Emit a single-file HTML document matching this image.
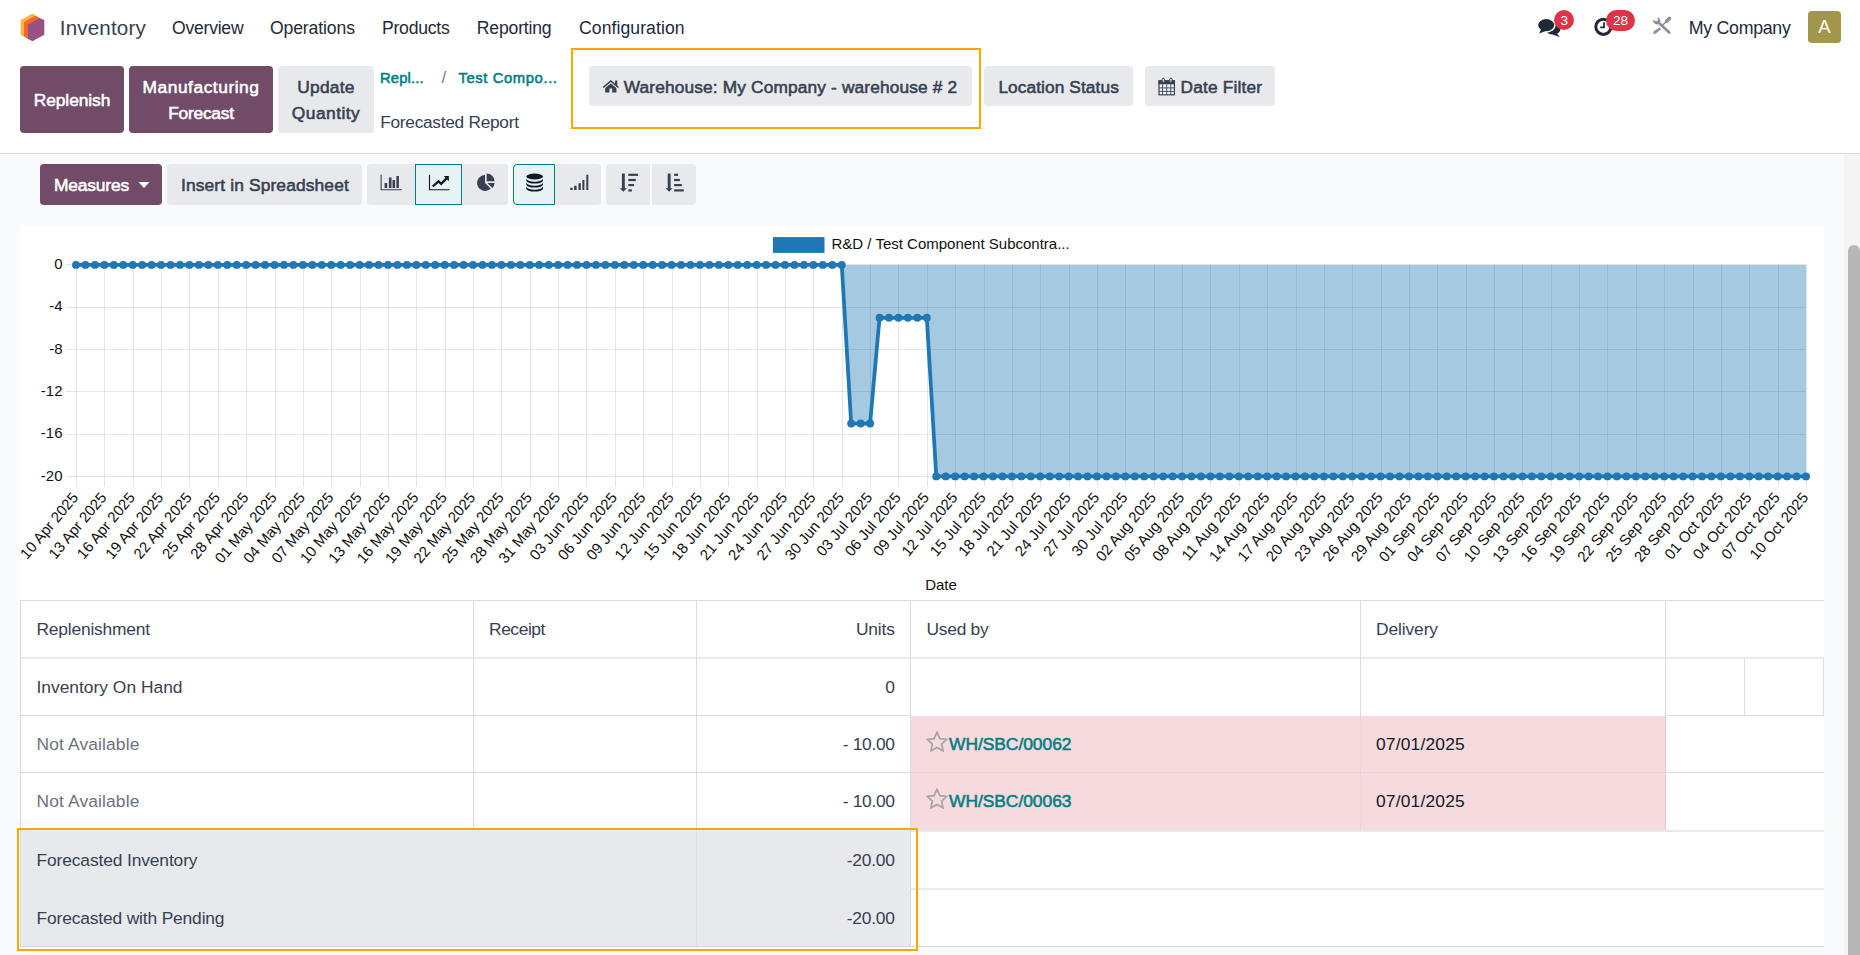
<!DOCTYPE html>
<html lang="en"><head><meta charset="utf-8"><title>Forecasted Report</title>
<style>
html,body{margin:0;padding:0;}
body{width:1860px;height:955px;overflow:hidden;position:relative;background:#fff;font-family:"Liberation Sans",Arial,sans-serif;}
.b{position:absolute;display:block;}
.t{position:absolute;white-space:nowrap;display:block;}
</style></head><body>
<span class="t" style="top:13.10px;font-size:20.6px;line-height:29px;color:#374151;letter-spacing:0.163px;left:59.80px;">Inventory</span>
<span class="t" style="top:15.90px;font-size:17.6px;line-height:25px;color:#1f2937;letter-spacing:-0.244px;left:172.00px;">Overview</span>
<span class="t" style="top:15.90px;font-size:17.6px;line-height:25px;color:#1f2937;letter-spacing:-0.109px;left:269.90px;">Operations</span>
<span class="t" style="top:15.90px;font-size:17.6px;line-height:25px;color:#1f2937;letter-spacing:-0.245px;left:382.00px;">Products</span>
<span class="t" style="top:15.90px;font-size:17.6px;line-height:25px;color:#1f2937;letter-spacing:-0.179px;left:476.80px;">Reporting</span>
<span class="t" style="top:15.90px;font-size:17.6px;line-height:25px;color:#1f2937;letter-spacing:0.078px;left:579.00px;">Configuration</span>
<span class="t" style="top:15.90px;font-size:17.8px;line-height:25px;color:#1f2937;letter-spacing:-0.286px;left:1688.70px;">My Company</span>
<div class="b " style="left:1808px;top:11px;width:33px;height:32px;background:#A2964A;border-radius:4px;"><span class="t" style="top:3.00px;font-size:18.5px;line-height:26px;color:#fff;left:-483.50px;width:1000px;text-align:center;">A</span></div>
<div class="b " style="left:1554.2px;top:10.2px;width:20.200000000000045px;height:20.2px;background:#DC3545;border-radius:10.1px;z-index:3;"><span class="t" style="top:0.90px;font-size:13.6px;line-height:19px;color:#fff;left:-489.90px;width:1000px;text-align:center;">3</span></div>
<div class="b " style="left:1606.2px;top:9.8px;width:28.59999999999991px;height:21.0px;background:#DC3545;border-radius:10.5px;z-index:3;"><span class="t" style="top:1.10px;font-size:13.6px;line-height:19px;color:#fff;left:-485.70px;width:1000px;text-align:center;">28</span></div>
<div class="b " style="left:20px;top:66px;width:104px;height:67px;background:#714B67;border-radius:4px;"><span class="t" style="top:21.50px;font-size:17.4px;line-height:24px;color:#fff;-webkit-text-stroke:0.55px #fff;letter-spacing:-0.098px;left:-448.00px;width:1000px;text-align:center;">Replenish</span></div>
<div class="b " style="left:129px;top:66px;width:144px;height:67px;background:#714B67;border-radius:4px;"><span class="t" style="top:8.60px;font-size:17.4px;line-height:24px;color:#fff;-webkit-text-stroke:0.55px #fff;letter-spacing:0.518px;left:-428.00px;width:1000px;text-align:center;">Manufacturing</span><span class="t" style="top:34.60px;font-size:17.4px;line-height:24px;color:#fff;-webkit-text-stroke:0.55px #fff;letter-spacing:-0.274px;left:-428.00px;width:1000px;text-align:center;">Forecast</span></div>
<div class="b " style="left:278px;top:66px;width:96px;height:67px;background:#E7E9ED;border-radius:4px;"><span class="t" style="top:8.60px;font-size:17.4px;line-height:24px;color:#374151;-webkit-text-stroke:0.55px #374151;letter-spacing:0.232px;left:-452.00px;width:1000px;text-align:center;">Update</span><span class="t" style="top:34.60px;font-size:17.4px;line-height:24px;color:#374151;-webkit-text-stroke:0.55px #374151;letter-spacing:0.462px;left:-452.00px;width:1000px;text-align:center;">Quantity</span></div>
<span class="t" style="top:67.90px;font-size:14.8px;line-height:21px;color:#017E84;-webkit-text-stroke:0.55px #017E84;letter-spacing:0.161px;left:379.90px;">Repl...</span>
<span class="t" style="top:67.40px;font-size:15.6px;line-height:22px;color:#6b7280;left:441.80px;">/</span>
<span class="t" style="top:67.90px;font-size:14.8px;line-height:21px;color:#017E84;-webkit-text-stroke:0.55px #017E84;letter-spacing:0.608px;left:458.40px;">Test Compo...</span>
<span class="t" style="top:110.30px;font-size:17.3px;line-height:24px;color:#374151;letter-spacing:-0.269px;left:380.20px;">Forecasted Report</span>
<div class="b " style="left:570.6px;top:48.4px;width:410.4px;height:80.5px;border:2.5px solid #FFA500;box-sizing:border-box;"></div>
<div class="b " style="left:589.2px;top:66px;width:382.9px;height:39.900000000000006px;background:#E7E9ED;border-radius:4px;"></div>
<span class="t" style="top:74.80px;font-size:17.3px;line-height:24px;color:#374151;-webkit-text-stroke:0.55px #374151;letter-spacing:0.156px;left:623.70px;">Warehouse: My Company - warehouse # 2</span>
<div class="b " style="left:983.9px;top:66px;width:149.10000000000002px;height:39.900000000000006px;background:#E7E9ED;border-radius:4px;"></div>
<span class="t" style="top:74.80px;font-size:17.3px;line-height:24px;color:#374151;-webkit-text-stroke:0.55px #374151;letter-spacing:0.089px;left:998.40px;">Location Status</span>
<div class="b " style="left:1144.8px;top:66px;width:130.20000000000005px;height:39.900000000000006px;background:#E7E9ED;border-radius:4px;"></div>
<span class="t" style="top:74.80px;font-size:17.3px;line-height:24px;color:#374151;-webkit-text-stroke:0.55px #374151;letter-spacing:0.164px;left:1180.60px;">Date Filter</span>
<div class="b " style="left:0px;top:153px;width:1860px;height:802px;background:#F9FAFB;border-top:1px solid #D8DADD;box-sizing:border-box;z-index:-1;"></div>
<div class="b " style="left:1844px;top:154px;width:16px;height:801px;background:#F4F4F4;"></div>
<div class="b " style="left:1848px;top:245px;width:12px;height:730px;background:#B7B7B7;border-radius:6px;"></div>
<div class="b " style="left:40px;top:164px;width:122px;height:40.69999999999999px;background:#714B67;border-radius:4px;"></div>
<span class="t" style="top:173.10px;font-size:17.4px;line-height:24px;color:#fff;-webkit-text-stroke:0.55px #fff;letter-spacing:-0.175px;left:54.00px;">Measures</span>
<div class="b " style="left:167.2px;top:164px;width:194.8px;height:40.69999999999999px;background:#E7E9ED;border-radius:4px;"></div>
<span class="t" style="top:173.10px;font-size:17.4px;line-height:24px;color:#374151;-webkit-text-stroke:0.55px #374151;letter-spacing:0.124px;left:181.00px;">Insert in Spreadsheet</span>
<div class="b " style="left:367px;top:164px;width:141px;height:40.69999999999999px;background:#E7E9ED;border-radius:4px;"></div>
<div class="b " style="left:415px;top:164px;width:47px;height:40.69999999999999px;background:#E6F2F3;border:1px solid #017E84;box-sizing:border-box;"></div>
<div class="b " style="left:513px;top:164px;width:88px;height:40.69999999999999px;background:#E7E9ED;border-radius:4px;"></div>
<div class="b " style="left:513px;top:164px;width:42px;height:40.69999999999999px;background:#E6F2F3;border:1px solid #017E84;box-sizing:border-box;border-radius:4px 0 0 4px;"></div>
<div class="b " style="left:606.1px;top:164px;width:43.69999999999993px;height:40.69999999999999px;background:#E7E9ED;border-radius:4px 0 0 4px;"></div>
<div class="b " style="left:652px;top:164px;width:43.89999999999998px;height:40.69999999999999px;background:#E7E9ED;border-radius:0 4px 4px 0;"></div>
<div class="b " style="left:20px;top:225px;width:1804px;height:375px;background:#fff;"></div>
<svg class="b" style="left:0;top:0" width="1844" height="610" viewBox="0 0 1844 610" font-family="Liberation Sans, Arial, sans-serif"><path d="M66 264.5 H1806.0 M66 307.5 H1806.0 M66 349.5 H1806.0 M66 391.5 H1806.0 M66 434.5 H1806.0 M66 476.5 H1806.0 M76.5 264.5 V486.5 M104.5 264.5 V486.5 M133.5 264.5 V486.5 M161.5 264.5 V486.5 M189.5 264.5 V486.5 M218.5 264.5 V486.5 M246.5 264.5 V486.5 M275.5 264.5 V486.5 M303.5 264.5 V486.5 M331.5 264.5 V486.5 M360.5 264.5 V486.5 M388.5 264.5 V486.5 M416.5 264.5 V486.5 M445.5 264.5 V486.5 M473.5 264.5 V486.5 M501.5 264.5 V486.5 M530.5 264.5 V486.5 M558.5 264.5 V486.5 M586.5 264.5 V486.5 M615.5 264.5 V486.5 M643.5 264.5 V486.5 M672.5 264.5 V486.5 M700.5 264.5 V486.5 M728.5 264.5 V486.5 M757.5 264.5 V486.5 M785.5 264.5 V486.5 M813.5 264.5 V486.5 M842.5 264.5 V486.5 M870.5 264.5 V486.5 M898.5 264.5 V486.5 M927.5 264.5 V486.5 M955.5 264.5 V486.5 M984.5 264.5 V486.5 M1012.5 264.5 V486.5 M1040.5 264.5 V486.5 M1069.5 264.5 V486.5 M1097.5 264.5 V486.5 M1125.5 264.5 V486.5 M1154.5 264.5 V486.5 M1182.5 264.5 V486.5 M1210.5 264.5 V486.5 M1239.5 264.5 V486.5 M1267.5 264.5 V486.5 M1296.5 264.5 V486.5 M1324.5 264.5 V486.5 M1352.5 264.5 V486.5 M1381.5 264.5 V486.5 M1409.5 264.5 V486.5 M1437.5 264.5 V486.5 M1466.5 264.5 V486.5 M1494.5 264.5 V486.5 M1522.5 264.5 V486.5 M1551.5 264.5 V486.5 M1579.5 264.5 V486.5 M1607.5 264.5 V486.5 M1636.5 264.5 V486.5 M1664.5 264.5 V486.5 M1693.5 264.5 V486.5 M1721.5 264.5 V486.5 M1749.5 264.5 V486.5 M1778.5 264.5 V486.5 M1806.5 264.5 V486.5" stroke="rgba(0,0,0,0.1)" stroke-width="1" fill="none"/><path d="M76.00 264.90 L85.45 264.90 L94.91 264.90 L104.36 264.90 L113.81 264.90 L123.27 264.90 L132.72 264.90 L142.17 264.90 L151.63 264.90 L161.08 264.90 L170.54 264.90 L179.99 264.90 L189.44 264.90 L198.90 264.90 L208.35 264.90 L217.80 264.90 L227.26 264.90 L236.71 264.90 L246.16 264.90 L255.62 264.90 L265.07 264.90 L274.52 264.90 L283.98 264.90 L293.43 264.90 L302.89 264.90 L312.34 264.90 L321.79 264.90 L331.25 264.90 L340.70 264.90 L350.15 264.90 L359.61 264.90 L369.06 264.90 L378.51 264.90 L387.97 264.90 L397.42 264.90 L406.87 264.90 L416.33 264.90 L425.78 264.90 L435.23 264.90 L444.69 264.90 L454.14 264.90 L463.60 264.90 L473.05 264.90 L482.50 264.90 L491.96 264.90 L501.41 264.90 L510.86 264.90 L520.32 264.90 L529.77 264.90 L539.22 264.90 L548.68 264.90 L558.13 264.90 L567.58 264.90 L577.04 264.90 L586.49 264.90 L595.95 264.90 L605.40 264.90 L614.85 264.90 L624.31 264.90 L633.76 264.90 L643.21 264.90 L652.67 264.90 L662.12 264.90 L671.57 264.90 L681.03 264.90 L690.48 264.90 L699.93 264.90 L709.39 264.90 L718.84 264.90 L728.30 264.90 L737.75 264.90 L747.20 264.90 L756.66 264.90 L766.11 264.90 L775.56 264.90 L785.02 264.90 L794.47 264.90 L803.92 264.90 L813.38 264.90 L822.83 264.90 L832.28 264.90 L841.74 264.90 L851.19 423.52 L860.64 423.52 L870.10 423.52 L879.55 317.77 L889.01 317.77 L898.46 317.77 L907.91 317.77 L917.37 317.77 L926.82 317.77 L936.27 476.40 L945.73 476.40 L955.18 476.40 L964.63 476.40 L974.09 476.40 L983.54 476.40 L992.99 476.40 L1002.45 476.40 L1011.90 476.40 L1021.36 476.40 L1030.81 476.40 L1040.26 476.40 L1049.72 476.40 L1059.17 476.40 L1068.62 476.40 L1078.08 476.40 L1087.53 476.40 L1096.98 476.40 L1106.44 476.40 L1115.89 476.40 L1125.34 476.40 L1134.80 476.40 L1144.25 476.40 L1153.70 476.40 L1163.16 476.40 L1172.61 476.40 L1182.07 476.40 L1191.52 476.40 L1200.97 476.40 L1210.43 476.40 L1219.88 476.40 L1229.33 476.40 L1238.79 476.40 L1248.24 476.40 L1257.69 476.40 L1267.15 476.40 L1276.60 476.40 L1286.05 476.40 L1295.51 476.40 L1304.96 476.40 L1314.42 476.40 L1323.87 476.40 L1333.32 476.40 L1342.78 476.40 L1352.23 476.40 L1361.68 476.40 L1371.14 476.40 L1380.59 476.40 L1390.04 476.40 L1399.50 476.40 L1408.95 476.40 L1418.40 476.40 L1427.86 476.40 L1437.31 476.40 L1446.77 476.40 L1456.22 476.40 L1465.67 476.40 L1475.13 476.40 L1484.58 476.40 L1494.03 476.40 L1503.49 476.40 L1512.94 476.40 L1522.39 476.40 L1531.85 476.40 L1541.30 476.40 L1550.75 476.40 L1560.21 476.40 L1569.66 476.40 L1579.11 476.40 L1588.57 476.40 L1598.02 476.40 L1607.48 476.40 L1616.93 476.40 L1626.38 476.40 L1635.84 476.40 L1645.29 476.40 L1654.74 476.40 L1664.20 476.40 L1673.65 476.40 L1683.10 476.40 L1692.56 476.40 L1702.01 476.40 L1711.46 476.40 L1720.92 476.40 L1730.37 476.40 L1739.83 476.40 L1749.28 476.40 L1758.73 476.40 L1768.19 476.40 L1777.64 476.40 L1787.09 476.40 L1796.55 476.40 L1806.00 476.40 L1806.00 264.9 L76.00 264.9 Z" fill="rgba(31,119,180,0.4)"/><path d="M76.00 264.90 L85.45 264.90 L94.91 264.90 L104.36 264.90 L113.81 264.90 L123.27 264.90 L132.72 264.90 L142.17 264.90 L151.63 264.90 L161.08 264.90 L170.54 264.90 L179.99 264.90 L189.44 264.90 L198.90 264.90 L208.35 264.90 L217.80 264.90 L227.26 264.90 L236.71 264.90 L246.16 264.90 L255.62 264.90 L265.07 264.90 L274.52 264.90 L283.98 264.90 L293.43 264.90 L302.89 264.90 L312.34 264.90 L321.79 264.90 L331.25 264.90 L340.70 264.90 L350.15 264.90 L359.61 264.90 L369.06 264.90 L378.51 264.90 L387.97 264.90 L397.42 264.90 L406.87 264.90 L416.33 264.90 L425.78 264.90 L435.23 264.90 L444.69 264.90 L454.14 264.90 L463.60 264.90 L473.05 264.90 L482.50 264.90 L491.96 264.90 L501.41 264.90 L510.86 264.90 L520.32 264.90 L529.77 264.90 L539.22 264.90 L548.68 264.90 L558.13 264.90 L567.58 264.90 L577.04 264.90 L586.49 264.90 L595.95 264.90 L605.40 264.90 L614.85 264.90 L624.31 264.90 L633.76 264.90 L643.21 264.90 L652.67 264.90 L662.12 264.90 L671.57 264.90 L681.03 264.90 L690.48 264.90 L699.93 264.90 L709.39 264.90 L718.84 264.90 L728.30 264.90 L737.75 264.90 L747.20 264.90 L756.66 264.90 L766.11 264.90 L775.56 264.90 L785.02 264.90 L794.47 264.90 L803.92 264.90 L813.38 264.90 L822.83 264.90 L832.28 264.90 L841.74 264.90 L851.19 423.52 L860.64 423.52 L870.10 423.52 L879.55 317.77 L889.01 317.77 L898.46 317.77 L907.91 317.77 L917.37 317.77 L926.82 317.77 L936.27 476.40 L945.73 476.40 L955.18 476.40 L964.63 476.40 L974.09 476.40 L983.54 476.40 L992.99 476.40 L1002.45 476.40 L1011.90 476.40 L1021.36 476.40 L1030.81 476.40 L1040.26 476.40 L1049.72 476.40 L1059.17 476.40 L1068.62 476.40 L1078.08 476.40 L1087.53 476.40 L1096.98 476.40 L1106.44 476.40 L1115.89 476.40 L1125.34 476.40 L1134.80 476.40 L1144.25 476.40 L1153.70 476.40 L1163.16 476.40 L1172.61 476.40 L1182.07 476.40 L1191.52 476.40 L1200.97 476.40 L1210.43 476.40 L1219.88 476.40 L1229.33 476.40 L1238.79 476.40 L1248.24 476.40 L1257.69 476.40 L1267.15 476.40 L1276.60 476.40 L1286.05 476.40 L1295.51 476.40 L1304.96 476.40 L1314.42 476.40 L1323.87 476.40 L1333.32 476.40 L1342.78 476.40 L1352.23 476.40 L1361.68 476.40 L1371.14 476.40 L1380.59 476.40 L1390.04 476.40 L1399.50 476.40 L1408.95 476.40 L1418.40 476.40 L1427.86 476.40 L1437.31 476.40 L1446.77 476.40 L1456.22 476.40 L1465.67 476.40 L1475.13 476.40 L1484.58 476.40 L1494.03 476.40 L1503.49 476.40 L1512.94 476.40 L1522.39 476.40 L1531.85 476.40 L1541.30 476.40 L1550.75 476.40 L1560.21 476.40 L1569.66 476.40 L1579.11 476.40 L1588.57 476.40 L1598.02 476.40 L1607.48 476.40 L1616.93 476.40 L1626.38 476.40 L1635.84 476.40 L1645.29 476.40 L1654.74 476.40 L1664.20 476.40 L1673.65 476.40 L1683.10 476.40 L1692.56 476.40 L1702.01 476.40 L1711.46 476.40 L1720.92 476.40 L1730.37 476.40 L1739.83 476.40 L1749.28 476.40 L1758.73 476.40 L1768.19 476.40 L1777.64 476.40 L1787.09 476.40 L1796.55 476.40 L1806.00 476.40" fill="none" stroke="#1f77b4" stroke-width="3.75" stroke-linejoin="round"/><g fill="#1f77b4"><circle cx="76.00" cy="264.90" r="3.95"/><circle cx="85.45" cy="264.90" r="3.95"/><circle cx="94.91" cy="264.90" r="3.95"/><circle cx="104.36" cy="264.90" r="3.95"/><circle cx="113.81" cy="264.90" r="3.95"/><circle cx="123.27" cy="264.90" r="3.95"/><circle cx="132.72" cy="264.90" r="3.95"/><circle cx="142.17" cy="264.90" r="3.95"/><circle cx="151.63" cy="264.90" r="3.95"/><circle cx="161.08" cy="264.90" r="3.95"/><circle cx="170.54" cy="264.90" r="3.95"/><circle cx="179.99" cy="264.90" r="3.95"/><circle cx="189.44" cy="264.90" r="3.95"/><circle cx="198.90" cy="264.90" r="3.95"/><circle cx="208.35" cy="264.90" r="3.95"/><circle cx="217.80" cy="264.90" r="3.95"/><circle cx="227.26" cy="264.90" r="3.95"/><circle cx="236.71" cy="264.90" r="3.95"/><circle cx="246.16" cy="264.90" r="3.95"/><circle cx="255.62" cy="264.90" r="3.95"/><circle cx="265.07" cy="264.90" r="3.95"/><circle cx="274.52" cy="264.90" r="3.95"/><circle cx="283.98" cy="264.90" r="3.95"/><circle cx="293.43" cy="264.90" r="3.95"/><circle cx="302.89" cy="264.90" r="3.95"/><circle cx="312.34" cy="264.90" r="3.95"/><circle cx="321.79" cy="264.90" r="3.95"/><circle cx="331.25" cy="264.90" r="3.95"/><circle cx="340.70" cy="264.90" r="3.95"/><circle cx="350.15" cy="264.90" r="3.95"/><circle cx="359.61" cy="264.90" r="3.95"/><circle cx="369.06" cy="264.90" r="3.95"/><circle cx="378.51" cy="264.90" r="3.95"/><circle cx="387.97" cy="264.90" r="3.95"/><circle cx="397.42" cy="264.90" r="3.95"/><circle cx="406.87" cy="264.90" r="3.95"/><circle cx="416.33" cy="264.90" r="3.95"/><circle cx="425.78" cy="264.90" r="3.95"/><circle cx="435.23" cy="264.90" r="3.95"/><circle cx="444.69" cy="264.90" r="3.95"/><circle cx="454.14" cy="264.90" r="3.95"/><circle cx="463.60" cy="264.90" r="3.95"/><circle cx="473.05" cy="264.90" r="3.95"/><circle cx="482.50" cy="264.90" r="3.95"/><circle cx="491.96" cy="264.90" r="3.95"/><circle cx="501.41" cy="264.90" r="3.95"/><circle cx="510.86" cy="264.90" r="3.95"/><circle cx="520.32" cy="264.90" r="3.95"/><circle cx="529.77" cy="264.90" r="3.95"/><circle cx="539.22" cy="264.90" r="3.95"/><circle cx="548.68" cy="264.90" r="3.95"/><circle cx="558.13" cy="264.90" r="3.95"/><circle cx="567.58" cy="264.90" r="3.95"/><circle cx="577.04" cy="264.90" r="3.95"/><circle cx="586.49" cy="264.90" r="3.95"/><circle cx="595.95" cy="264.90" r="3.95"/><circle cx="605.40" cy="264.90" r="3.95"/><circle cx="614.85" cy="264.90" r="3.95"/><circle cx="624.31" cy="264.90" r="3.95"/><circle cx="633.76" cy="264.90" r="3.95"/><circle cx="643.21" cy="264.90" r="3.95"/><circle cx="652.67" cy="264.90" r="3.95"/><circle cx="662.12" cy="264.90" r="3.95"/><circle cx="671.57" cy="264.90" r="3.95"/><circle cx="681.03" cy="264.90" r="3.95"/><circle cx="690.48" cy="264.90" r="3.95"/><circle cx="699.93" cy="264.90" r="3.95"/><circle cx="709.39" cy="264.90" r="3.95"/><circle cx="718.84" cy="264.90" r="3.95"/><circle cx="728.30" cy="264.90" r="3.95"/><circle cx="737.75" cy="264.90" r="3.95"/><circle cx="747.20" cy="264.90" r="3.95"/><circle cx="756.66" cy="264.90" r="3.95"/><circle cx="766.11" cy="264.90" r="3.95"/><circle cx="775.56" cy="264.90" r="3.95"/><circle cx="785.02" cy="264.90" r="3.95"/><circle cx="794.47" cy="264.90" r="3.95"/><circle cx="803.92" cy="264.90" r="3.95"/><circle cx="813.38" cy="264.90" r="3.95"/><circle cx="822.83" cy="264.90" r="3.95"/><circle cx="832.28" cy="264.90" r="3.95"/><circle cx="841.74" cy="264.90" r="3.95"/><circle cx="851.19" cy="423.52" r="3.95"/><circle cx="860.64" cy="423.52" r="3.95"/><circle cx="870.10" cy="423.52" r="3.95"/><circle cx="879.55" cy="317.77" r="3.95"/><circle cx="889.01" cy="317.77" r="3.95"/><circle cx="898.46" cy="317.77" r="3.95"/><circle cx="907.91" cy="317.77" r="3.95"/><circle cx="917.37" cy="317.77" r="3.95"/><circle cx="926.82" cy="317.77" r="3.95"/><circle cx="936.27" cy="476.40" r="3.95"/><circle cx="945.73" cy="476.40" r="3.95"/><circle cx="955.18" cy="476.40" r="3.95"/><circle cx="964.63" cy="476.40" r="3.95"/><circle cx="974.09" cy="476.40" r="3.95"/><circle cx="983.54" cy="476.40" r="3.95"/><circle cx="992.99" cy="476.40" r="3.95"/><circle cx="1002.45" cy="476.40" r="3.95"/><circle cx="1011.90" cy="476.40" r="3.95"/><circle cx="1021.36" cy="476.40" r="3.95"/><circle cx="1030.81" cy="476.40" r="3.95"/><circle cx="1040.26" cy="476.40" r="3.95"/><circle cx="1049.72" cy="476.40" r="3.95"/><circle cx="1059.17" cy="476.40" r="3.95"/><circle cx="1068.62" cy="476.40" r="3.95"/><circle cx="1078.08" cy="476.40" r="3.95"/><circle cx="1087.53" cy="476.40" r="3.95"/><circle cx="1096.98" cy="476.40" r="3.95"/><circle cx="1106.44" cy="476.40" r="3.95"/><circle cx="1115.89" cy="476.40" r="3.95"/><circle cx="1125.34" cy="476.40" r="3.95"/><circle cx="1134.80" cy="476.40" r="3.95"/><circle cx="1144.25" cy="476.40" r="3.95"/><circle cx="1153.70" cy="476.40" r="3.95"/><circle cx="1163.16" cy="476.40" r="3.95"/><circle cx="1172.61" cy="476.40" r="3.95"/><circle cx="1182.07" cy="476.40" r="3.95"/><circle cx="1191.52" cy="476.40" r="3.95"/><circle cx="1200.97" cy="476.40" r="3.95"/><circle cx="1210.43" cy="476.40" r="3.95"/><circle cx="1219.88" cy="476.40" r="3.95"/><circle cx="1229.33" cy="476.40" r="3.95"/><circle cx="1238.79" cy="476.40" r="3.95"/><circle cx="1248.24" cy="476.40" r="3.95"/><circle cx="1257.69" cy="476.40" r="3.95"/><circle cx="1267.15" cy="476.40" r="3.95"/><circle cx="1276.60" cy="476.40" r="3.95"/><circle cx="1286.05" cy="476.40" r="3.95"/><circle cx="1295.51" cy="476.40" r="3.95"/><circle cx="1304.96" cy="476.40" r="3.95"/><circle cx="1314.42" cy="476.40" r="3.95"/><circle cx="1323.87" cy="476.40" r="3.95"/><circle cx="1333.32" cy="476.40" r="3.95"/><circle cx="1342.78" cy="476.40" r="3.95"/><circle cx="1352.23" cy="476.40" r="3.95"/><circle cx="1361.68" cy="476.40" r="3.95"/><circle cx="1371.14" cy="476.40" r="3.95"/><circle cx="1380.59" cy="476.40" r="3.95"/><circle cx="1390.04" cy="476.40" r="3.95"/><circle cx="1399.50" cy="476.40" r="3.95"/><circle cx="1408.95" cy="476.40" r="3.95"/><circle cx="1418.40" cy="476.40" r="3.95"/><circle cx="1427.86" cy="476.40" r="3.95"/><circle cx="1437.31" cy="476.40" r="3.95"/><circle cx="1446.77" cy="476.40" r="3.95"/><circle cx="1456.22" cy="476.40" r="3.95"/><circle cx="1465.67" cy="476.40" r="3.95"/><circle cx="1475.13" cy="476.40" r="3.95"/><circle cx="1484.58" cy="476.40" r="3.95"/><circle cx="1494.03" cy="476.40" r="3.95"/><circle cx="1503.49" cy="476.40" r="3.95"/><circle cx="1512.94" cy="476.40" r="3.95"/><circle cx="1522.39" cy="476.40" r="3.95"/><circle cx="1531.85" cy="476.40" r="3.95"/><circle cx="1541.30" cy="476.40" r="3.95"/><circle cx="1550.75" cy="476.40" r="3.95"/><circle cx="1560.21" cy="476.40" r="3.95"/><circle cx="1569.66" cy="476.40" r="3.95"/><circle cx="1579.11" cy="476.40" r="3.95"/><circle cx="1588.57" cy="476.40" r="3.95"/><circle cx="1598.02" cy="476.40" r="3.95"/><circle cx="1607.48" cy="476.40" r="3.95"/><circle cx="1616.93" cy="476.40" r="3.95"/><circle cx="1626.38" cy="476.40" r="3.95"/><circle cx="1635.84" cy="476.40" r="3.95"/><circle cx="1645.29" cy="476.40" r="3.95"/><circle cx="1654.74" cy="476.40" r="3.95"/><circle cx="1664.20" cy="476.40" r="3.95"/><circle cx="1673.65" cy="476.40" r="3.95"/><circle cx="1683.10" cy="476.40" r="3.95"/><circle cx="1692.56" cy="476.40" r="3.95"/><circle cx="1702.01" cy="476.40" r="3.95"/><circle cx="1711.46" cy="476.40" r="3.95"/><circle cx="1720.92" cy="476.40" r="3.95"/><circle cx="1730.37" cy="476.40" r="3.95"/><circle cx="1739.83" cy="476.40" r="3.95"/><circle cx="1749.28" cy="476.40" r="3.95"/><circle cx="1758.73" cy="476.40" r="3.95"/><circle cx="1768.19" cy="476.40" r="3.95"/><circle cx="1777.64" cy="476.40" r="3.95"/><circle cx="1787.09" cy="476.40" r="3.95"/><circle cx="1796.55" cy="476.40" r="3.95"/><circle cx="1806.00" cy="476.40" r="3.95"/></g><text x="62.5" y="269.00" text-anchor="end" font-size="15" fill="#111">0</text><text x="62.5" y="311.30" text-anchor="end" font-size="15" fill="#111">-4</text><text x="62.5" y="353.60" text-anchor="end" font-size="15" fill="#111">-8</text><text x="62.5" y="395.90" text-anchor="end" font-size="15" fill="#111">-12</text><text x="62.5" y="438.20" text-anchor="end" font-size="15" fill="#111">-16</text><text x="62.5" y="480.50" text-anchor="end" font-size="15" fill="#111">-20</text><text transform="translate(79.10 497.90) rotate(-50)" text-anchor="end" font-size="15" fill="#111">10 Apr 2025</text><text transform="translate(107.46 497.90) rotate(-50)" text-anchor="end" font-size="15" fill="#111">13 Apr 2025</text><text transform="translate(135.82 497.90) rotate(-50)" text-anchor="end" font-size="15" fill="#111">16 Apr 2025</text><text transform="translate(164.18 497.90) rotate(-50)" text-anchor="end" font-size="15" fill="#111">19 Apr 2025</text><text transform="translate(192.54 497.90) rotate(-50)" text-anchor="end" font-size="15" fill="#111">22 Apr 2025</text><text transform="translate(220.90 497.90) rotate(-50)" text-anchor="end" font-size="15" fill="#111">25 Apr 2025</text><text transform="translate(249.26 497.90) rotate(-50)" text-anchor="end" font-size="15" fill="#111">28 Apr 2025</text><text transform="translate(277.62 497.90) rotate(-50)" text-anchor="end" font-size="15" fill="#111">01 May 2025</text><text transform="translate(305.99 497.90) rotate(-50)" text-anchor="end" font-size="15" fill="#111">04 May 2025</text><text transform="translate(334.35 497.90) rotate(-50)" text-anchor="end" font-size="15" fill="#111">07 May 2025</text><text transform="translate(362.71 497.90) rotate(-50)" text-anchor="end" font-size="15" fill="#111">10 May 2025</text><text transform="translate(391.07 497.90) rotate(-50)" text-anchor="end" font-size="15" fill="#111">13 May 2025</text><text transform="translate(419.43 497.90) rotate(-50)" text-anchor="end" font-size="15" fill="#111">16 May 2025</text><text transform="translate(447.79 497.90) rotate(-50)" text-anchor="end" font-size="15" fill="#111">19 May 2025</text><text transform="translate(476.15 497.90) rotate(-50)" text-anchor="end" font-size="15" fill="#111">22 May 2025</text><text transform="translate(504.51 497.90) rotate(-50)" text-anchor="end" font-size="15" fill="#111">25 May 2025</text><text transform="translate(532.87 497.90) rotate(-50)" text-anchor="end" font-size="15" fill="#111">28 May 2025</text><text transform="translate(561.23 497.90) rotate(-50)" text-anchor="end" font-size="15" fill="#111">31 May 2025</text><text transform="translate(589.59 497.90) rotate(-50)" text-anchor="end" font-size="15" fill="#111">03 Jun 2025</text><text transform="translate(617.95 497.90) rotate(-50)" text-anchor="end" font-size="15" fill="#111">06 Jun 2025</text><text transform="translate(646.31 497.90) rotate(-50)" text-anchor="end" font-size="15" fill="#111">09 Jun 2025</text><text transform="translate(674.67 497.90) rotate(-50)" text-anchor="end" font-size="15" fill="#111">12 Jun 2025</text><text transform="translate(703.03 497.90) rotate(-50)" text-anchor="end" font-size="15" fill="#111">15 Jun 2025</text><text transform="translate(731.40 497.90) rotate(-50)" text-anchor="end" font-size="15" fill="#111">18 Jun 2025</text><text transform="translate(759.76 497.90) rotate(-50)" text-anchor="end" font-size="15" fill="#111">21 Jun 2025</text><text transform="translate(788.12 497.90) rotate(-50)" text-anchor="end" font-size="15" fill="#111">24 Jun 2025</text><text transform="translate(816.48 497.90) rotate(-50)" text-anchor="end" font-size="15" fill="#111">27 Jun 2025</text><text transform="translate(844.84 497.90) rotate(-50)" text-anchor="end" font-size="15" fill="#111">30 Jun 2025</text><text transform="translate(873.20 497.90) rotate(-50)" text-anchor="end" font-size="15" fill="#111">03 Jul 2025</text><text transform="translate(901.56 497.90) rotate(-50)" text-anchor="end" font-size="15" fill="#111">06 Jul 2025</text><text transform="translate(929.92 497.90) rotate(-50)" text-anchor="end" font-size="15" fill="#111">09 Jul 2025</text><text transform="translate(958.28 497.90) rotate(-50)" text-anchor="end" font-size="15" fill="#111">12 Jul 2025</text><text transform="translate(986.64 497.90) rotate(-50)" text-anchor="end" font-size="15" fill="#111">15 Jul 2025</text><text transform="translate(1015.00 497.90) rotate(-50)" text-anchor="end" font-size="15" fill="#111">18 Jul 2025</text><text transform="translate(1043.36 497.90) rotate(-50)" text-anchor="end" font-size="15" fill="#111">21 Jul 2025</text><text transform="translate(1071.72 497.90) rotate(-50)" text-anchor="end" font-size="15" fill="#111">24 Jul 2025</text><text transform="translate(1100.08 497.90) rotate(-50)" text-anchor="end" font-size="15" fill="#111">27 Jul 2025</text><text transform="translate(1128.44 497.90) rotate(-50)" text-anchor="end" font-size="15" fill="#111">30 Jul 2025</text><text transform="translate(1156.80 497.90) rotate(-50)" text-anchor="end" font-size="15" fill="#111">02 Aug 2025</text><text transform="translate(1185.17 497.90) rotate(-50)" text-anchor="end" font-size="15" fill="#111">05 Aug 2025</text><text transform="translate(1213.53 497.90) rotate(-50)" text-anchor="end" font-size="15" fill="#111">08 Aug 2025</text><text transform="translate(1241.89 497.90) rotate(-50)" text-anchor="end" font-size="15" fill="#111">11 Aug 2025</text><text transform="translate(1270.25 497.90) rotate(-50)" text-anchor="end" font-size="15" fill="#111">14 Aug 2025</text><text transform="translate(1298.61 497.90) rotate(-50)" text-anchor="end" font-size="15" fill="#111">17 Aug 2025</text><text transform="translate(1326.97 497.90) rotate(-50)" text-anchor="end" font-size="15" fill="#111">20 Aug 2025</text><text transform="translate(1355.33 497.90) rotate(-50)" text-anchor="end" font-size="15" fill="#111">23 Aug 2025</text><text transform="translate(1383.69 497.90) rotate(-50)" text-anchor="end" font-size="15" fill="#111">26 Aug 2025</text><text transform="translate(1412.05 497.90) rotate(-50)" text-anchor="end" font-size="15" fill="#111">29 Aug 2025</text><text transform="translate(1440.41 497.90) rotate(-50)" text-anchor="end" font-size="15" fill="#111">01 Sep 2025</text><text transform="translate(1468.77 497.90) rotate(-50)" text-anchor="end" font-size="15" fill="#111">04 Sep 2025</text><text transform="translate(1497.13 497.90) rotate(-50)" text-anchor="end" font-size="15" fill="#111">07 Sep 2025</text><text transform="translate(1525.49 497.90) rotate(-50)" text-anchor="end" font-size="15" fill="#111">10 Sep 2025</text><text transform="translate(1553.85 497.90) rotate(-50)" text-anchor="end" font-size="15" fill="#111">13 Sep 2025</text><text transform="translate(1582.21 497.90) rotate(-50)" text-anchor="end" font-size="15" fill="#111">16 Sep 2025</text><text transform="translate(1610.58 497.90) rotate(-50)" text-anchor="end" font-size="15" fill="#111">19 Sep 2025</text><text transform="translate(1638.94 497.90) rotate(-50)" text-anchor="end" font-size="15" fill="#111">22 Sep 2025</text><text transform="translate(1667.30 497.90) rotate(-50)" text-anchor="end" font-size="15" fill="#111">25 Sep 2025</text><text transform="translate(1695.66 497.90) rotate(-50)" text-anchor="end" font-size="15" fill="#111">28 Sep 2025</text><text transform="translate(1724.02 497.90) rotate(-50)" text-anchor="end" font-size="15" fill="#111">01 Oct 2025</text><text transform="translate(1752.38 497.90) rotate(-50)" text-anchor="end" font-size="15" fill="#111">04 Oct 2025</text><text transform="translate(1780.74 497.90) rotate(-50)" text-anchor="end" font-size="15" fill="#111">07 Oct 2025</text><text transform="translate(1809.10 497.90) rotate(-50)" text-anchor="end" font-size="15" fill="#111">10 Oct 2025</text><rect x="772.9" y="237.1" width="51.6" height="15.8" fill="#1f77b4"/><text x="831.5" y="249" font-size="15" fill="#111">R&amp;D / Test Component Subcontra...</text><text x="941" y="589.5" text-anchor="middle" font-size="15" fill="#111">Date</text></svg>
<div class="b " style="left:20px;top:600px;width:1804px;height:347px;background:#fff;"></div>
<div class="b " style="left:911px;top:716px;width:754px;height:114px;background:#F7DADD;"></div>
<div class="b " style="left:911px;top:772px;width:754px;height:1px;background:#EBD3D8;"></div>
<div class="b " style="left:1360px;top:716px;width:1px;height:114px;background:#EBD3D8;"></div>
<div class="b " style="left:1665px;top:716px;width:1px;height:114px;background:#E6CDD2;"></div>
<div class="b " style="left:21px;top:832px;width:889px;height:114px;background:#E7E9ED;"></div>
<div class="b " style="left:20px;top:600px;width:1804px;height:1px;background:#D9DBDF;"></div>
<div class="b " style="left:20px;top:657px;width:1804px;height:2px;background:#E7E9ED;"></div>
<div class="b " style="left:20px;top:715px;width:891px;height:1px;background:#D9DBDF;"></div>
<div class="b " style="left:1665px;top:715px;width:159px;height:1px;background:#D9DBDF;"></div>
<div class="b " style="left:20px;top:772px;width:891px;height:1px;background:#D9DBDF;"></div>
<div class="b " style="left:1665px;top:772px;width:159px;height:1px;background:#D9DBDF;"></div>
<div class="b " style="left:20px;top:830px;width:1804px;height:2px;background:#E7E9ED;"></div>
<div class="b " style="left:911px;top:888px;width:913px;height:2px;background:#E7E9ED;"></div>
<div class="b " style="left:20px;top:946px;width:1804px;height:1px;background:#D5D7DB;"></div>
<div class="b " style="left:20px;top:600px;width:1px;height:347px;background:#D9DBDF;"></div>
<div class="b " style="left:473px;top:600px;width:1px;height:230px;background:#D9DBDF;"></div>
<div class="b " style="left:696px;top:600px;width:1px;height:230px;background:#D9DBDF;"></div>
<div class="b " style="left:696px;top:832px;width:1px;height:114px;background:#DDDFE3;"></div>
<div class="b " style="left:910px;top:600px;width:1px;height:346px;background:#D9DBDF;"></div>
<div class="b " style="left:1360px;top:600px;width:1px;height:116px;background:#D9DBDF;"></div>
<div class="b " style="left:1665px;top:600px;width:1px;height:116px;background:#D9DBDF;"></div>
<div class="b " style="left:1744px;top:659px;width:1px;height:56px;background:#D9DBDF;"></div>
<div class="b " style="left:1823px;top:659px;width:1px;height:56px;background:#D9DBDF;"></div>
<span class="t" style="top:617.00px;font-size:17.4px;line-height:24px;color:#374151;letter-spacing:-0.198px;left:36.50px;">Replenishment</span>
<span class="t" style="top:617.00px;font-size:17.4px;line-height:24px;color:#374151;letter-spacing:-0.428px;left:489.00px;">Receipt</span>
<span class="t" style="top:617.00px;font-size:17.4px;line-height:24px;color:#374151;letter-spacing:-0.129px;right:965.13px;">Units</span>
<span class="t" style="top:617.00px;font-size:17.4px;line-height:24px;color:#374151;letter-spacing:-0.262px;left:926.50px;">Used by</span>
<span class="t" style="top:617.00px;font-size:17.4px;line-height:24px;color:#374151;letter-spacing:-0.106px;left:1376.00px;">Delivery</span>
<span class="t" style="top:675.00px;font-size:17.4px;line-height:24px;color:#374151;left:36.50px;">Inventory On Hand</span>
<span class="t" style="top:675.00px;font-size:17.4px;line-height:24px;color:#374151;right:965.00px;">0</span>
<span class="t" style="top:732.00px;font-size:17.4px;line-height:24px;color:#6B7280;letter-spacing:0.134px;left:36.50px;">Not Available</span>
<span class="t" style="top:732.00px;font-size:17.4px;line-height:24px;color:#374151;letter-spacing:-0.310px;right:965.31px;">- 10.00</span>
<span class="t" style="top:789.00px;font-size:17.4px;line-height:24px;color:#6B7280;letter-spacing:0.134px;left:36.50px;">Not Available</span>
<span class="t" style="top:789.00px;font-size:17.4px;line-height:24px;color:#374151;letter-spacing:-0.310px;right:965.31px;">- 10.00</span>
<span class="t" style="top:848.00px;font-size:17.4px;line-height:24px;color:#374151;letter-spacing:-0.123px;left:36.50px;">Forecasted Inventory</span>
<span class="t" style="top:848.00px;font-size:17.4px;line-height:24px;color:#374151;letter-spacing:-0.223px;right:965.22px;">-20.00</span>
<span class="t" style="top:906.00px;font-size:17.4px;line-height:24px;color:#374151;letter-spacing:-0.153px;left:36.50px;">Forecasted with Pending</span>
<span class="t" style="top:906.00px;font-size:17.4px;line-height:24px;color:#374151;letter-spacing:-0.223px;right:965.22px;">-20.00</span>
<svg class="b" style="left:926px;top:731px" width="22" height="21" viewBox="0 0 22 21"><path d="M11 1.3 L13.9 7.6 L20.7 8.4 L15.7 13 L17 19.8 L11 16.4 L5 19.8 L6.3 13 L1.3 8.4 L8.1 7.6 Z" fill="none" stroke="#A3A5AA" stroke-width="1.7" stroke-linejoin="miter"/></svg>
<svg class="b" style="left:926px;top:788px" width="22" height="21" viewBox="0 0 22 21"><path d="M11 1.3 L13.9 7.6 L20.7 8.4 L15.7 13 L17 19.8 L11 16.4 L5 19.8 L6.3 13 L1.3 8.4 L8.1 7.6 Z" fill="none" stroke="#A3A5AA" stroke-width="1.7" stroke-linejoin="miter"/></svg>
<span class="t" style="top:732.00px;font-size:17.4px;line-height:24px;color:#017E84;-webkit-text-stroke:0.55px #017E84;letter-spacing:-0.027px;left:949.00px;">WH/SBC/00062</span>
<span class="t" style="top:789.00px;font-size:17.4px;line-height:24px;color:#017E84;-webkit-text-stroke:0.55px #017E84;letter-spacing:-0.027px;left:949.00px;">WH/SBC/00063</span>
<span class="t" style="top:732.00px;font-size:17.4px;line-height:24px;color:#111827;letter-spacing:0.191px;left:1376.00px;">07/01/2025</span>
<span class="t" style="top:789.00px;font-size:17.4px;line-height:24px;color:#111827;letter-spacing:0.191px;left:1376.00px;">07/01/2025</span>
<div class="b " style="left:17px;top:827.8px;width:901px;height:123.20000000000005px;border:2.5px solid #FFA500;box-sizing:border-box;"></div>
<svg class="b" style="left:0;top:0" width="1860" height="215" viewBox="0 0 1860 215"><polygon points="32.4,13.5 36.6,16.2 25,23 25,37.2 20.6,34.7 20.6,20.1" fill="#FBB54A"/><polygon points="35.45,15.6 40.6,18.4 29,25.2 29,39.4 23.9,36.35 23.9,22.2" fill="#F76627"/><polygon points="39.7,17.96 44.3,20.1 44.3,34.7 32.4,41.3 27.9,38.7 27.9,24.8" fill="#985184"/><ellipse cx="1553" cy="29.1" rx="7.5" ry="5.5" fill="#1f2937"/><path d="M1556.3 32.6 L1559.8 37 L1552.5 34.4 Z" fill="#1f2937"/><ellipse cx="1546.2" cy="25.1" rx="8.8" ry="6.8" fill="#1f2937" stroke="#fff" stroke-width="1.5"/><path d="M1541.4 28.6 L1539.2 33.5 L1546.4 30.8 Z" fill="#1f2937"/><circle cx="1603.4" cy="26.8" r="7.6" fill="none" stroke="#1f2937" stroke-width="3"/><path d="M1604 22.3 V27.3 H1600.2" fill="none" stroke="#1f2937" stroke-width="1.7"/><path d="M1658.2 22.2 L1669.3 32.4" stroke="#8a9097" stroke-width="2.7" stroke-linecap="round" fill="none"/><path d="M1653.4 19.6 A3.6 3.6 0 0 0 1659.6 23 A3.6 3.6 0 0 0 1657.4 17.3 L1657.9 20.6 L1655.6 21.6 Z" fill="#8a9097"/><path d="M1669.6 18.2 L1666.6 21.2" stroke="#8a9097" stroke-width="3.4" stroke-linecap="round" fill="none"/><path d="M1665.6 22.2 L1661.8 26" stroke="#8a9097" stroke-width="1.6" fill="none"/><path d="M1659.6 27.4 L1661.2 29 L1656 33.4 L1653 34 L1653.8 31.2 Z" fill="#8a9097"/><path d="M610.8 79.9 L602.6 86.9 L603.7 88.1 L610.8 82.1 L617.9 88.1 L619 86.9 L617.3 85.4 V80.5 H615.1 V83.5 Z" fill="#374151"/><path d="M610.8 83.4 L605.2 88.1 V92.6 H609.4 V88.6 H612.2 V92.6 H616.4 V88.1 Z" fill="#374151"/><rect x="1159" y="80.9" width="15.4" height="13.9" fill="#F5F6F8" stroke="#374151" stroke-width="1.2"/><path d="M1158.4 80.3 H1175 V84.3 H1158.4Z" fill="#374151"/><path d="M1162.6 84.3 V94.8 M1166.7 84.3 V94.8 M1170.8 84.3 V94.8 M1159 87.9 H1174.4 M1159 91.4 H1174.4" stroke="#374151" stroke-width="0.9" fill="none"/><rect x="1162.2" y="78.2" width="2.2" height="4.2" rx="1.1" fill="#E7E9ED" stroke="#374151" stroke-width="1"/><rect x="1169.8" y="78.2" width="2.2" height="4.2" rx="1.1" fill="#E7E9ED" stroke="#374151" stroke-width="1"/><path d="M138.5 182 H149.5 L144 188 Z" fill="#fff"/><path d="M381.1 174.8 V189.7 H401.8" fill="none" stroke="#374151" stroke-width="1.1"/><path d="M384.6 183 H387.2 V188.1 H384.6Z M388.9 177.4 H391.5 V188.1 H388.9Z M392.5 180 H395.1 V188.1 H392.5Z M396.4 176.1 H398.9 V188.1 H396.4Z" fill="#374151"/><path d="M429.5 174.8 V189.7 H449.5" fill="none" stroke="#111827" stroke-width="1.1"/><path d="M432.7 186.5 L438.5 181.3 L441.1 183.9 L446.6 178.4" fill="none" stroke="#111827" stroke-width="2.3"/><path d="M443.7 176.1 H448.9 V181.3 Z" fill="#111827"/><path d="M485 174.9 V182.9 L490.7 188.6 A8 8 0 1 1 485 174.9Z" fill="#374151"/><path d="M486.6 173.5 A8 8 0 0 1 494.6 181.3 H486.6Z" fill="#374151"/><path d="M487.4 183 H494.6 A8 8 0 0 1 492.4 187.9Z" fill="#374151"/><ellipse cx="534.65" cy="176.5" rx="8.35" ry="3" fill="#111827"/><path d="M526.3 178.6 A8.35 3.1 0 0 0 543 178.6 V180.5 A8.35 3.1 0 0 1 526.3 180.5Z" fill="#111827"/><path d="M526.3 182.6 A8.35 3.1 0 0 0 543 182.6 V184.5 A8.35 3.1 0 0 1 526.3 184.5Z" fill="#111827"/><path d="M526.3 186.6 A8.35 3.1 0 0 0 543 186.6 V188.5 A8.35 3.1 0 0 1 526.3 188.5Z" fill="#111827"/><path d="M570.2 187.7 H572.7 V190 H570.2Z M574.1 185.8 H576.6 V190 H574.1Z M578.5 183.2 H580.8 V190 H578.5Z M582.4 180 H584.4 V190 H582.4Z M586.3 174.8 H588.3 V190 H586.3Z" fill="#374151"/><path d="M621.9 173.5 H624.8 V188.2 H626.8 L623.35 191.8 L619.9 188.2 H621.9Z" fill="#374151"/><path d="M628.3 173.7 H638.0999999999999 V175.89999999999998 H628.3Z" fill="#374151"/><path d="M628.3 178.9 H635.8 V181.1 H628.3Z" fill="#374151"/><path d="M628.3 184 H633.9 V186.2 H628.3Z" fill="#374151"/><path d="M628.3 189.3 H631.9 V191.5 H628.3Z" fill="#374151"/><path d="M667.7 173.5 H670.6 V188.2 H672.6 L669.1500000000001 191.8 L665.7 188.2 H667.7Z" fill="#374151"/><path d="M674.1 173.7 H678.0 V175.89999999999998 H674.1Z" fill="#374151"/><path d="M674.1 178.9 H679.9 V181.1 H674.1Z" fill="#374151"/><path d="M674.1 184 H681.8000000000001 V186.2 H674.1Z" fill="#374151"/><path d="M674.1 189.3 H683.8000000000001 V191.5 H674.1Z" fill="#374151"/></svg>
</body></html>
